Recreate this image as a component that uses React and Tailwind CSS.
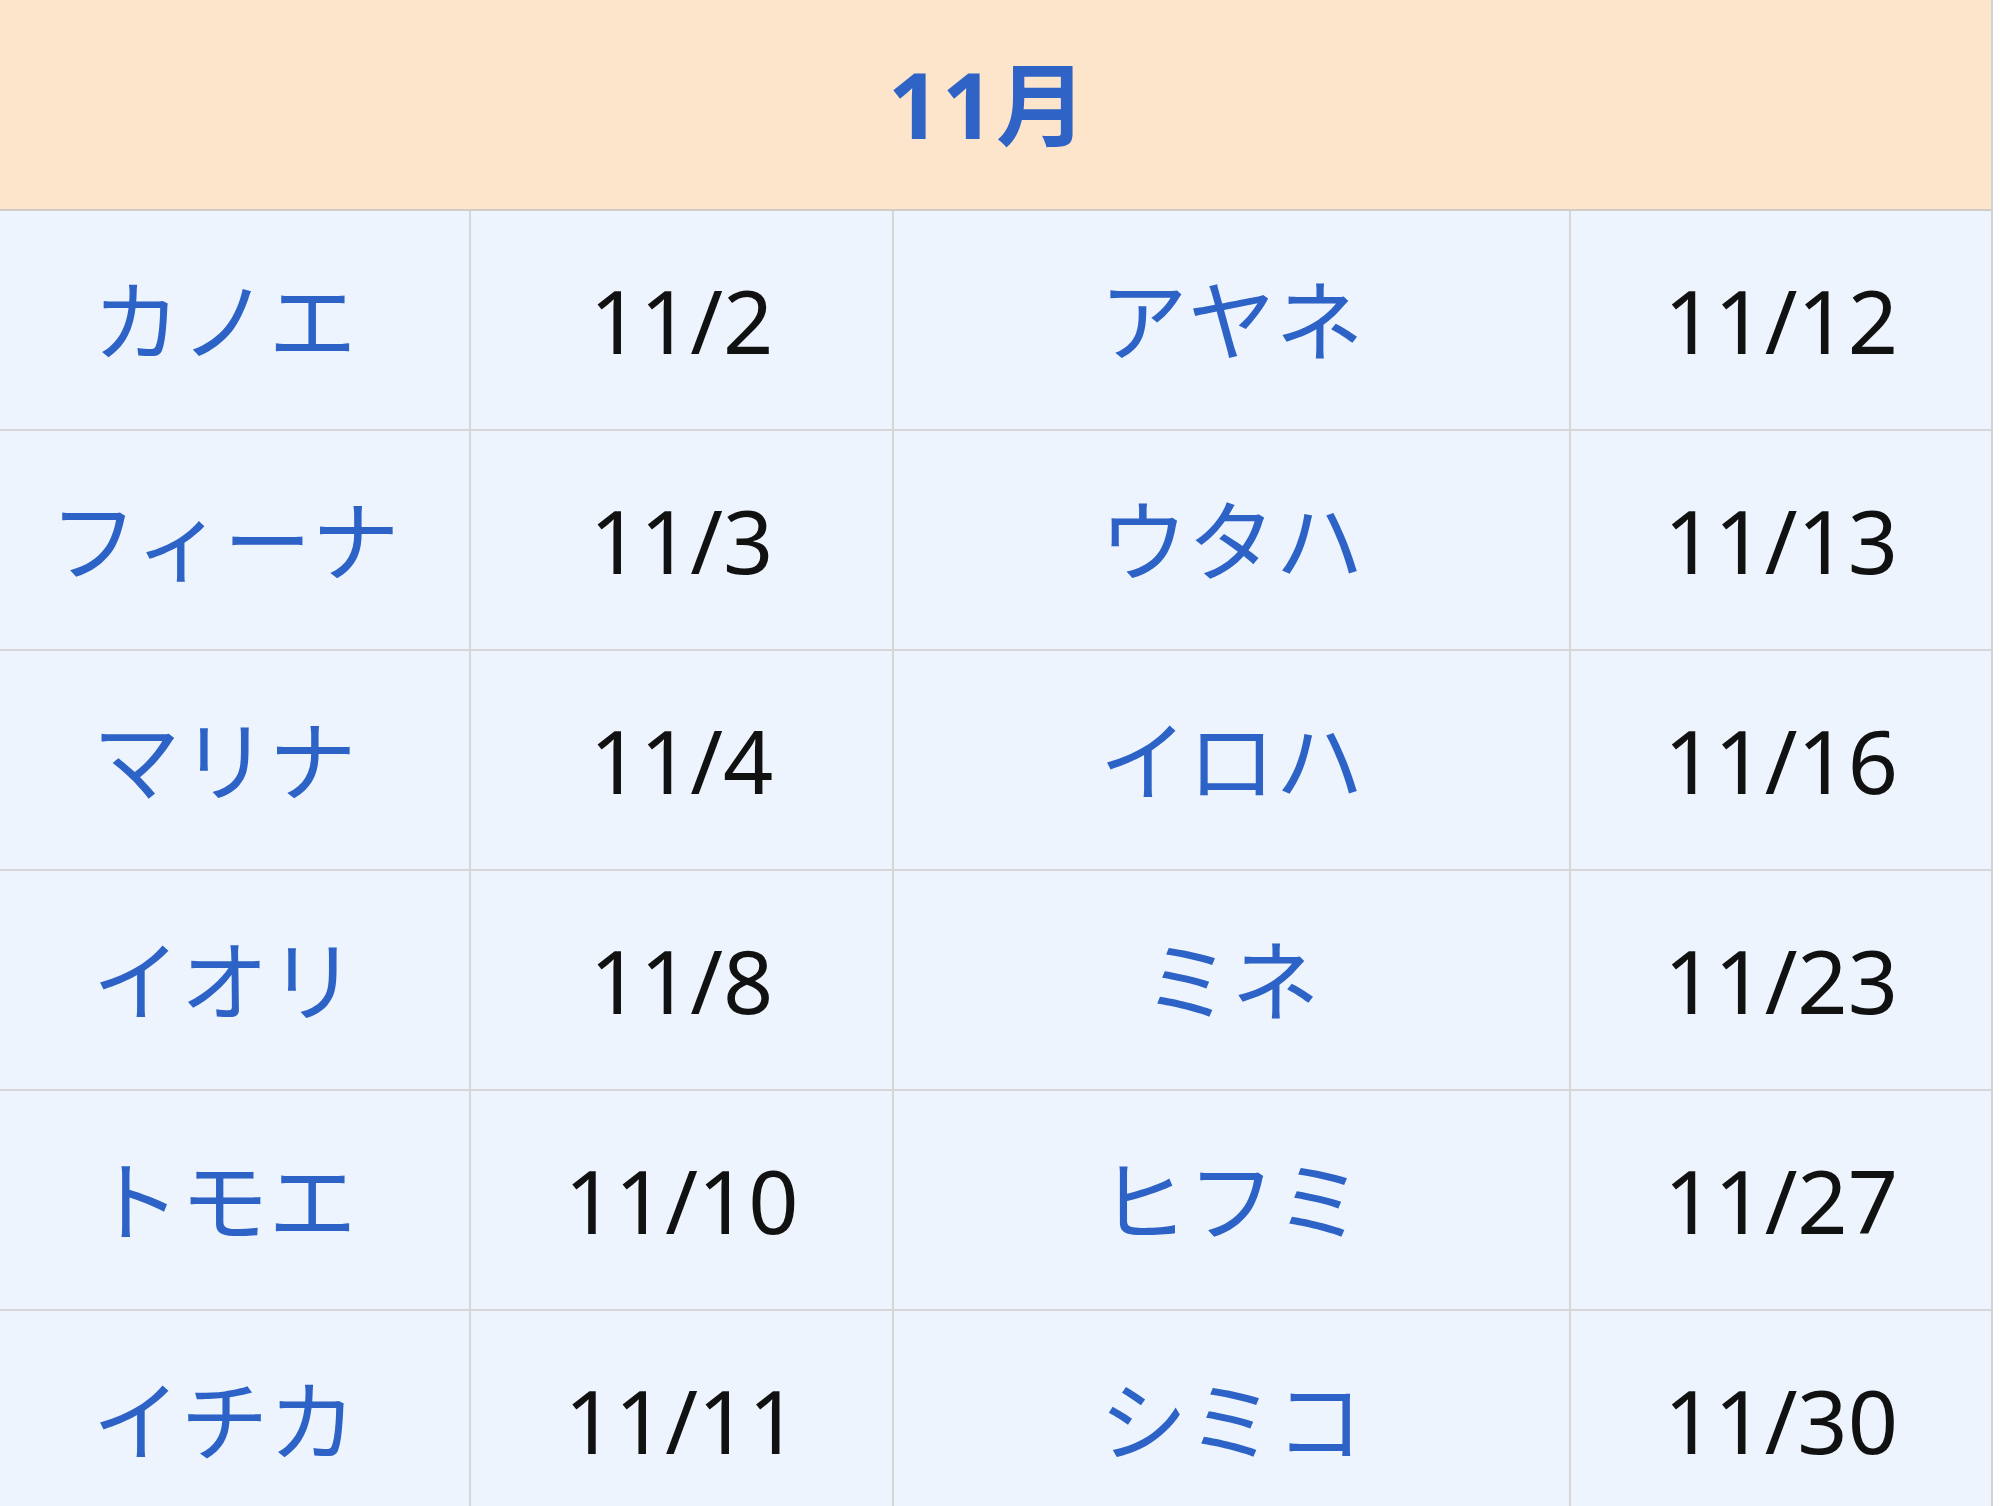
import React from "react";

const rows = [
  ["カノエ", "11/2", "アヤネ", "11/12"],
  ["フィーナ", "11/3", "ウタハ", "11/13"],
  ["マリナ", "11/4", "イロハ", "11/16"],
  ["イオリ", "11/8", "ミネ", "11/23"],
  ["トモエ", "11/10", "ヒフミ", "11/27"],
  ["イチカ", "11/11", "シミコ", "11/30"],
];

export default function App() {
  return (
    <div className="w-[2000px] h-[1506px] overflow-hidden bg-white font-['Noto_Sans','Noto_Sans_CJK_JP',sans-serif]">
      <div className="w-[1993px] border-r-2 border-[#d2d2d2]">
        <div className="h-[211px] bg-[#fde5cb] border-b-2 border-[#d0cdc9] flex items-center justify-center pr-[14px]">
          <span className="text-[91px] font-bold text-[#2f64c6] leading-none tracking-[2px]">11月</span>
        </div>
        {rows.map((r, i) => (
          <div key={i} className="flex h-[220px] bg-[#eef4fd] border-b-2 border-[#d6d6d6]">
            <div className="w-[471px] shrink-0 border-r-2 border-[#d6d6d6] flex items-center justify-center pr-[20px]">
              <span className="text-[88px] font-normal text-[#2d63c6] leading-none">{r[0]}</span>
            </div>
            <div className="w-[423px] shrink-0 border-r-2 border-[#d6d6d6] flex items-center justify-center">
              <span className="text-[88px] text-[#111111] leading-none">{r[1]}</span>
            </div>
            <div className="w-[677px] shrink-0 border-r-2 border-[#d6d6d6] flex items-center justify-center">
              <span className="text-[88px] font-normal text-[#2d63c6] leading-none">{r[2]}</span>
            </div>
            <div className="flex-1 flex items-center justify-center">
              <span className="text-[88px] text-[#111111] leading-none">{r[3]}</span>
            </div>
          </div>
        ))}
      </div>
    </div>
  );
}
